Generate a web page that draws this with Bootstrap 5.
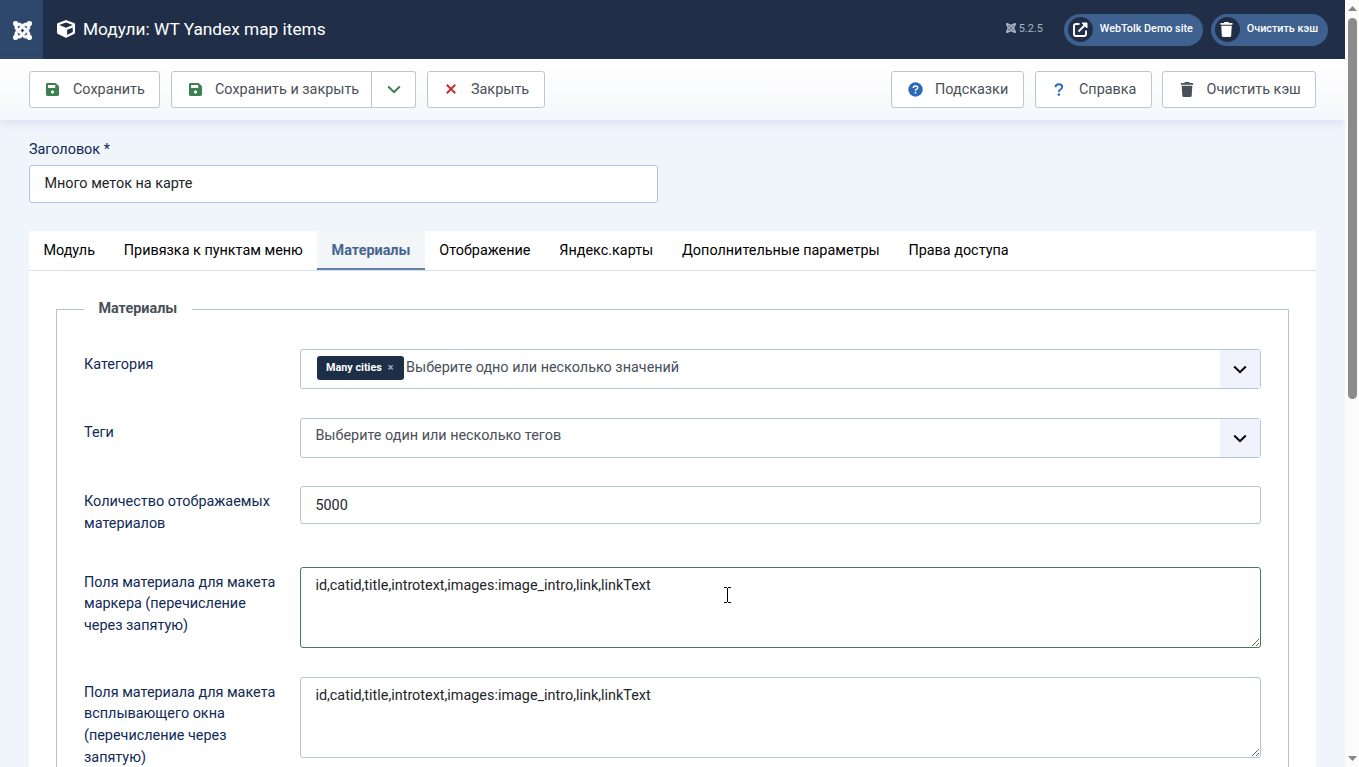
<!DOCTYPE html>
<html lang="ru">
<head>
<meta charset="utf-8">
<meta name="viewport" content="width=device-width, initial-scale=1">
<title>Модули: WT Yandex map items</title>
<link href="https://cdn.jsdelivr.net/npm/bootstrap@5.3.0/dist/css/bootstrap.min.css" rel="stylesheet">
<style>
  body { font-family: Roboto, "Liberation Sans", sans-serif; font-size: 14.4px; line-height: 21.7px; color: #22262a; background: #f0f4fb; height: 767px; overflow: hidden; }
  svg { display: block; flex: none; fill: currentColor; }
  .page { width: 1345px; height: 767px; overflow: hidden; }
  .topbar { height: 59px; background: #202f47; color: #fff; }
  .brand { width: 43px; background: #2e486b; }
  .page-title { font-size: 17.28px; font-weight: 400; line-height: 24px; margin: -2px 0 0 8px; }
  .version { font-size: 10.9px; color: #a9b3c3; gap: 3px; margin: -1px 21px 0 0; }
  .pill { height: 32px; border-radius: 16px; background: #3f618f; font-size: 10.8px; font-weight: 500; padding: 0 10px 2px 4px; color: #fff; text-decoration: none; white-space: nowrap; }
  .pill-icon { width: 25px; height: 25px; border-radius: 50%; background: #202f47; margin-top: 1px; }
  .toolbar { height: 61px; padding: 12px 29px 0; background: linear-gradient(#fff, #f6f7fb); box-shadow: 0 3px 9px rgba(95,110,190,.13); }
  .tool { height: 37px; border: 1px solid #c0c5ce; border-radius: 3px; background: #fff; color: #495057; font-size: 14.4px; line-height: 16px; padding: 0 0 0 14px; display: flex; align-items: center; white-space: nowrap; }
  .tool svg { margin-right: 13px; margin-top: -1px; }
  .field { border: 1px solid #b4c4da; border-radius: 3px; color: #22262a; font-size: 14.4px; line-height: 21.6px; padding: 7px 14.4px; box-shadow: none !important; }
  .form-label-text { color: #0f2a56; }
  .panel { margin: 28px 29px 0; background: #fff; height: 560px; }
  .tabs { height: 40px; border-bottom: 1px solid #d8e0eb; }
  .tabs .nav-link { color: #000; font-size: 14.4px; padding: 9px 14.4px 0; height: 39px; border-radius: 0; }
  .tabs .nav-link.active { color: #45648f; font-weight: 700; background: #f2f6f9; border-bottom: 2px solid #6180ab; }
  .group { margin: 38px 27px 0; border: 1px solid #b4c4d6; border-bottom: 0; height: 500px; padding: 0 27px; }
  .group-title { font-weight: 700; font-size: 14.4px; line-height: 22px; color: #495057; background: #fff; padding: 0 14.4px; margin: -12px 0 29px; width: max-content; float: none; }
  .rows { display: grid; grid-template-columns: 216px 1fr; row-gap: 29px; }
  .rows label { padding: 5px 15px 3.6px 0; line-height: 21.6px; color: #0f2a56; }
  .picker { height: 40px; padding: 0; background: #fff; color: #495057; }
  .picker-arrow { width: 40px; height: 100%; background: #f0f3fb; }
  .chip { background: #1d2e47; color: #fff; font-weight: 700; font-size: 10.8px; border-radius: 3px; height: 24px; line-height: 23px; padding: 0 9px; width: 87px; white-space: nowrap; }
  .area { height: 81px; min-height: 0; }
  .area.valid { border-color: #457d54; }
  .scroller { width: 14px; height: 767px; background: #fbfbfb; }
  .thumb { width: 9px; height: 381px; border-radius: 5px; background: #8b8b8b; margin-top: 7px; margin-left: 3px; }
  .pointer { position: absolute; left: 424px; top: 20px; }
</style>
</head>
<body>
<svg width="0" height="0" class="position-absolute">
  <symbol id="joomla" viewBox="0 32 448 448"><path d="M.6 92.1C.6 58.8 27.4 32 60.4 32c30 0 54.5 21.9 59.2 50.2 32.6-7.6 67.1.6 96.5 30l-44.3 44.3c-20.5-20.5-42.6-16.3-55.4-3.5-14.3 14.3-14.3 37.9 0 52.2l99.5 99.5-44 44.3c-87.7-87.2-49.7-49.7-99.8-99.7-26.8-26.5-35-64.8-24.8-98.9C20.4 144.6.6 120.7.6 92.1zm129.5 116.4l44.3 44.3c10-10 89.7-89.7 99.7-99.8 14.3-14.3 37.6-14.3 51.9 0 12.8 12.8 17 35-3.5 55.4l44 44.3c31.2-31.2 38.5-67.6 28.9-101.2 29.2-4.1 51.9-29.2 51.9-59.5 0-33.2-26.8-60.1-59.8-60.1-30.3 0-55.4 22.5-59.5 51.6-33.8-9.9-71.7-1.5-98.3 25.1-18.3 19.1-71.1 71.5-99.6 99.9zm266.3 152.2c8.2-32.7-.9-68.5-26.3-93.9-11.8-12.2 5 4.7-99.5-99.7l-44.3 44.3 99.7 99.7c14.3 14.3 14.3 37.6 0 51.9-12.8 12.8-35 17-55.4-3.5l-44 44.3c27.6 30.2 68 38.8 102.7 28 5.5 27.4 29.7 48.1 58.9 48.1 33 0 59.8-26.8 59.8-60.1 0-30.2-22.5-55-51.6-59.1zm-84.3-53.1l-44-44.3c-87 86.4-50.4 50.4-99.7 99.8-14.3 14.3-37.6 14.3-51.9 0-13.1-13.4-16.9-35.3 3.2-55.4l-44-44.3c-30.2 30.2-38 65.2-29.5 98.3-26.7 6-46.2 29.9-46.2 58.2C0 453.2 26.8 480 59.8 480c28.6 0 52.5-19.8 58.6-46.7 32.7 8.2 68.5-.6 94.2-26 32.1-32 12.2-12.4 99.5-99.7z"/></symbol>
  <symbol id="save" viewBox="0 32 448 448"><path d="M433.9 129.900l-83.900-83.900A48 48 0 0 0 316.100 32H48C21.500 32 0 53.500 0 80v352c0 26.500 21.500 48 48 48h352c26.500 0 48-21.500 48-48V163.900a48 48 0 0 0-14.100-34zM224 400c-30 0-54-24-54-54s24-54 54-54 54 24 54 54-24 54-54 54zm96-288.500V190c0 6.600-5.400 12-12 12H84c-6.600 0-12-5.400-12-12V116c0-6.600 5.400-12 12-12h220.500c3.200 0 15.500 1 15.500 7.500z"/></symbol>
  <symbol id="trash" viewBox="0 0 14 16"><path d="M.5 1h3.700l.7-1h4.200l.7 1h3.700v2H.5zM1.300 4h11.400l-.7 10.600q-.1 1.400-1.500 1.400h-7q-1.400 0-1.500-1.400z"/></symbol>
  <symbol id="down" viewBox="0 0 14 9"><path d="M1.200 1.500 7 7.200l5.800-5.700" fill="none" stroke="currentColor" stroke-width="2"/></symbol>
</svg>
<div class="d-flex">
  <div class="page">
    <header class="topbar d-flex align-items-center">
      <a class="brand h-100 d-flex align-items-center justify-content-center text-white" href="#"><svg width="19" height="19" style="margin:1px 0 0 1px"><use href="#joomla" stroke="#fff" stroke-width="14"/></svg></a>
      <svg width="18" height="18" viewBox="0 0 512 512" style="margin:-2px 0 0 14px"><path d="M239.100 6.300l-208 78c-18.700 7-31.100 25-31.100 45v225.100c0 18.200 10.300 34.800 26.500 42.900l208 104c13.500 6.800 29.400 6.800 42.900 0l208-104c16.300-8.100 26.500-24.800 26.500-42.900V129.300c0-20-12.400-37.900-31.100-44.900l-208-78c-8.700-4.200-20.700-4.200-31.700-.1zM256 68.400l192 72v1.100l-192 78-192-78v-1.100l192-72zm32 356V275.500l160-65v133.900l-160 80z"/></svg>
      <h1 class="page-title">Модули: WT Yandex map items</h1>
      <div class="version ms-auto d-flex align-items-center"><svg width="10" height="10" style="margin-top:-1px"><use href="#joomla" stroke="#a9b3c3" stroke-width="12"/></svg>5.2.5</div>
      <a href="#" class="pill d-flex align-items-center me-2"><span class="pill-icon d-flex align-items-center justify-content-center"><svg width="15" height="15" viewBox="0 0 15 15" fill="none" stroke="#fff" stroke-width="1.900"><path fill="none" d="M6.500 2H3Q1 2 1 4v8q0 2 2 2h8q2 0 2-2V8.500M5.500 9.500l7-7"/><path d="M9 1h5v5z" fill="#fff" stroke-width="1"/></svg></span><span style="margin:0 0 0 7px">WebTolk Demo site</span></a>
      <a href="#" class="pill d-flex align-items-center" style="margin-right:17px"><span class="pill-icon d-flex align-items-center justify-content-center"><svg width="13" height="15" style="margin-left:-1px"><use href="#trash"/></svg></span><span style="margin:0 0 0 7px">Очистить кэш</span></a>
    </header>
    <div class="toolbar d-flex position-relative">
      <button class="tool" style="width:131px;padding-left:16px"><svg width="13" height="13" style="color:#3d8052;margin-right:14px"><use href="#save"/></svg>Сохранить</button>
      <div class="d-flex" style="margin-left:11px">
        <button class="tool rounded-end-0" style="width:201px;padding-left:17px"><svg width="13" height="13" style="color:#3d8052;margin-right:13px"><use href="#save"/></svg>Сохранить и закрыть</button>
        <button class="tool rounded-start-0 border-start-0" style="width:44px;padding-left:15px"><svg width="14" height="9" style="color:#3d8052;margin-top:0"><use href="#down"/></svg></button>
      </div>
      <button class="tool" style="margin-left:11px;width:118px;padding-left:18px"><svg width="10" height="10" viewBox="0 0 10 10" stroke="#c9302f" stroke-width="2" style="margin-right:15px"><path d="M.8.8l8.400 8.400M9.200.8.8 9.200"/></svg>Закрыть</button>
      <button class="tool ms-auto" style="width:133px;padding-left:16px"><svg width="15" height="15" viewBox="0 0 15 15" style="margin-right:12px"><circle cx="7.500" cy="7.500" r="7.200" fill="#2a69b8"/><path d="M5.300 6q0-2 2.200-2t2.200 1.800q0 1-1.300 1.600-.9.400-.9 1.400" fill="none" stroke="#fff" stroke-width="1.500"/><circle cx="7.500" cy="10.700" r=".95" fill="#fff"/></svg>Подсказки</button>
      <button class="tool" style="margin-left:11px;width:117px;padding-left:18px"><svg width="10" height="13" viewBox="0 0 10 13" style="margin-right:15px"><path d="M1.500 4.200q0-2.900 3.300-2.900T8.200 4q0 1.500-1.900 2.500Q4.900 7.200 4.900 9" fill="none" stroke="#2a69b8" stroke-width="1.900"/><circle cx="4.900" cy="11.600" r="1.300" fill="#2a69b8"/></svg>Справка</button>
      <button class="tool" style="margin-left:10px;width:154px;padding-left:17px"><svg width="14" height="15" style="margin-right:12.500px"><use href="#trash"/></svg>Очистить кэш</button>
    </div>
    <main>
      <div style="padding:19px 29px 0">
        <label class="form-label-text d-block" for="title" style="height:26px">Заголовок *</label>
        <input id="title" class="form-control field" style="width:629px;height:38px;padding-top:5px" value="Много меток на карте">
      </div>
      <section class="panel">
        <nav class="nav tabs flex-nowrap">
          <a class="nav-link" href="#">Модуль</a><a class="nav-link" href="#">Привязка к пунктам меню</a><a class="nav-link active" href="#">Материалы</a><a class="nav-link" href="#">Отображение</a><a class="nav-link" href="#">Яндекс.карты</a><a class="nav-link" href="#">Дополнительные параметры</a><a class="nav-link" href="#">Права доступа</a>
        </nav>
        <div class="group">
          <h2 class="group-title">Материалы</h2>
          <div class="rows">
            <label>Категория</label>
            <div class="field picker d-flex align-items-center"><span class="chip" style="margin:-3px 2px 0 16px">Many cities<span class="fw-bold" style="margin-left:6px;color:#a5afbd">×</span></span><span style="margin-top:-3px">Выберите одно или несколько значений</span><span class="picker-arrow ms-auto d-flex align-items-center justify-content-center text-black"><svg width="14" height="9"><use href="#down"/></svg></span></div>
            <label style="margin-top:-1px">Теги</label>
            <div class="field picker d-flex align-items-center"><span style="margin:-5px 0 0 14.4px">Выберите один или несколько тегов</span><span class="picker-arrow ms-auto d-flex align-items-center justify-content-center text-black"><svg width="14" height="9"><use href="#down"/></svg></span></div>
            <label for="count" style="margin-top:-1px">Количество отображаемых материалов</label>
            <input id="count" class="form-control field" style="height:38px;margin-top:-1px" value="5000">
            <label for="marker">Поля материала для макета маркера (перечисление через запятую)</label>
            <div class="position-relative" style="height:81px"><textarea id="marker" class="form-control field area valid">id,catid,title,introtext,images:image_intro,link,linkText</textarea>
              <svg class="pointer" width="7" height="16" viewBox="0 0 7 16" fill="none" stroke="#000"><path d="M0 .5h3M4 .5h3M3.500 1v14M0 15.500h3M4 15.500h3"/></svg></div>
            <label for="popup">Поля материала для макета всплывающего окна (перечисление через запятую)</label>
            <textarea id="popup" class="form-control field area">id,catid,title,introtext,images:image_intro,link,linkText</textarea>
          </div>
        </div>
      </section>
    </main>
  </div>
  <div class="scroller d-flex flex-column">
    <svg width="9" height="5" viewBox="0 0 9 5" style="margin:6px 0 0 3px;color:#858585"><path d="M0 5 4.500 0 9 5z"/></svg>
    <div class="thumb"></div>
    <svg class="mt-auto" width="9" height="5" viewBox="0 0 9 5" style="margin:0 0 6px 3px;color:#858585"><path d="M0 0h9L4.500 5z"/></svg>
  </div>
</div>
<script src="https://cdn.jsdelivr.net/npm/bootstrap@5.3.0/dist/js/bootstrap.bundle.min.js"></script>
</body>
</html>
